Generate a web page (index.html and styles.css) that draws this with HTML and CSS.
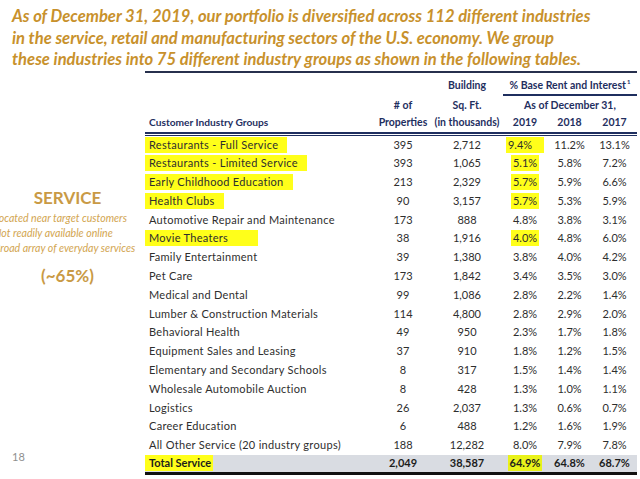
FILE: index.html
```html
<!DOCTYPE html>
<html lang="en">
<head>
<meta charset="utf-8">
<title>Service Industry Groups</title>
<link rel="stylesheet" href="styles.css">
</head>
<body>
<div class="page">
  <p class="title">As of December 31, 2019, our portfolio is diversified across 112 different industries<br>in the service, retail and manufacturing sectors of the U.S. economy. We group<br>these industries into 75 different industry groups as shown in the following tables.</p>
  <div class="main">
    <aside class="side">
      <div class="side-head">SERVICE</div>
      <ul class="bullets">
        <li>Located near target customers</li>
        <li>Not readily available online</li>
        <li>Broad array of everyday services</li>
      </ul>
      <div class="side-pct">(~65%)</div>
      <div class="pageno">18</div>
    </aside>
    <div class="tbl">
      <div class="cols hA">
        <div></div><div></div>
        <div class="hc hc-pad">Building</div>
        <div class="hc span3 uline">% Base Rent and Interest<sup>1</sup></div>
      </div>
      <div class="cols hB">
        <div></div>
        <div class="hc">#&nbsp;of</div>
        <div class="hc">Sq. Ft.</div>
        <div class="hc span3">As of December 31,</div>
      </div>
      <div class="cols hC">
        <div class="hc left">Customer Industry Groups</div>
        <div class="hc">Properties</div>
        <div class="hc">(in thousands)</div>
        <div class="hc">2019</div>
        <div class="hc">2018</div>
        <div class="hc">2017</div>
      </div>

      <div class="cols row"><div class="lbl"><span class="hl">Restaurants - Full Service</span></div><div>395</div><div>2,712</div><div><span class="hn hn-wide">9.4%</span></div><div>11.2%</div><div>13.1%</div></div>
      <div class="cols row"><div class="lbl"><span class="hl">Restaurants - Limited Service</span></div><div>393</div><div>1,065</div><div><span class="hn">5.1%</span></div><div>5.8%</div><div>7.2%</div></div>
      <div class="cols row"><div class="lbl"><span class="hl">Early Childhood Education</span></div><div>213</div><div>2,329</div><div><span class="hn">5.7%</span></div><div>5.9%</div><div>6.6%</div></div>
      <div class="cols row"><div class="lbl"><span class="hl">Health Clubs</span></div><div>90</div><div>3,157</div><div><span class="hn">5.7%</span></div><div>5.3%</div><div>5.9%</div></div>
      <div class="cols row"><div class="lbl">Automotive Repair and Maintenance</div><div>173</div><div>888</div><div>4.8%</div><div>3.8%</div><div>3.1%</div></div>
      <div class="cols row"><div class="lbl"><span class="hl hl-long">Movie Theaters</span></div><div>38</div><div>1,916</div><div><span class="hn">4.0%</span></div><div>4.8%</div><div>6.0%</div></div>
      <div class="cols row"><div class="lbl">Family Entertainment</div><div>39</div><div>1,380</div><div>3.8%</div><div>4.0%</div><div>4.2%</div></div>
      <div class="cols row"><div class="lbl">Pet Care</div><div>173</div><div>1,842</div><div>3.4%</div><div>3.5%</div><div>3.0%</div></div>
      <div class="cols row"><div class="lbl">Medical and Dental</div><div>99</div><div>1,086</div><div>2.8%</div><div>2.2%</div><div>1.4%</div></div>
      <div class="cols row"><div class="lbl">Lumber &amp; Construction Materials</div><div>114</div><div>4,800</div><div>2.8%</div><div>2.9%</div><div>2.0%</div></div>
      <div class="cols row"><div class="lbl">Behavioral Health</div><div>49</div><div>950</div><div>2.3%</div><div>1.7%</div><div>1.8%</div></div>
      <div class="cols row"><div class="lbl">Equipment Sales and Leasing</div><div>37</div><div>910</div><div>1.8%</div><div>1.2%</div><div>1.5%</div></div>
      <div class="cols row"><div class="lbl">Elementary and Secondary Schools</div><div>8</div><div>317</div><div>1.5%</div><div>1.4%</div><div>1.4%</div></div>
      <div class="cols row"><div class="lbl">Wholesale Automobile Auction</div><div>8</div><div>428</div><div>1.3%</div><div>1.0%</div><div>1.1%</div></div>
      <div class="cols row"><div class="lbl">Logistics</div><div>26</div><div>2,037</div><div>1.3%</div><div>0.6%</div><div>0.7%</div></div>
      <div class="cols row"><div class="lbl">Career Education</div><div>6</div><div>488</div><div>1.2%</div><div>1.6%</div><div>1.9%</div></div>
      <div class="cols row"><div class="lbl">All Other Service (20 industry groups)</div><div>188</div><div>12,282</div><div>8.0%</div><div>7.9%</div><div>7.8%</div></div>
      <div class="cols row total"><div class="lbl"><span class="hl hl-total">Total Service</span></div><div>2,049</div><div>38,587</div><div><span class="hn">64.9%</span></div><div>64.8%</div><div>68.7%</div></div>
    </div>
  </div>
</div>
</body>
</html>
```

FILE: styles.css
```css
* { box-sizing: border-box; }
html, body { margin: 0; padding: 0; background: #fff; }
body { font-family: Lato, "Open Sans", sans-serif; width: 640px; height: 479px; overflow: hidden; }

.page { display: flex; flex-direction: column; }

.title {
  margin: 0;
  padding: 6px 0 0 12px;
  font-size: 16.6px;
  line-height: 21.7px;
  font-weight: 700;
  font-style: italic;
  color: #c8912c;
  white-space: nowrap;
}

.main { display: flex; }

.side {
  width: 145px;
  flex: none;
  display: flex;
  flex-direction: column;
  align-items: center;
  padding: 117px 10px 11px 0;
  color: #c99a45;
  overflow: hidden;
}
.side-head { font-size: 17px; line-height: 20px; font-weight: 700; }
.bullets {
  list-style: none;
  margin: 3px 0 0 -6px;
  padding: 0;
  align-self: flex-start;
  font-size: 10.6px;
  line-height: 14.7px;
  font-style: italic;
  color: #d2a550;
  white-space: nowrap;
}
.side-pct { margin-top: 11px; font-size: 17px; line-height: 20px; font-weight: 700; }
.pageno {
  margin-top: auto;
  align-self: flex-start;
  padding-left: 12px;
  font-size: 11px;
  line-height: 14px;
  color: #8f8f8f;
}

.tbl {
  width: 492px;
  flex: none;
  border-top: 2px solid #27304d;
  font-size: 11px;
  color: #2e2e2e;
}

.cols {
  display: grid;
  grid-template-columns: 230px 56px 72px 44px 45px 45px;
}

.hc {
  text-align: center;
  font-weight: 700;
  color: #1f2f5f;
  font-size: 10.5px;
  line-height: 14px;
  white-space: nowrap;
}
.hc.left { text-align: left; padding-left: 4px; font-size: 10.2px; }
.span3 { grid-column: span 3; }

.hA { height: 23px; align-items: end; }
.hA .hc { padding-bottom: 2px; }
.hA .hc-pad { padding-bottom: 4px; }
.uline { border-bottom: 2px solid #1f2f5f; }
.hc sup { font-size: 6px; vertical-align: 5px; line-height: 0; margin-left: 1px; }

.hB { height: 17px; align-items: center; }

.hC {
  height: 21px;
  align-items: center;
  padding-bottom: 1px;
  border-bottom: 2px solid #1f2f5f;
  box-shadow: 0 1px 0 #fff, 0 2px 0 #1f2f5f;
  margin-bottom: 1px;
}

.row {
  height: 18.8px;
  align-items: center;
  line-height: 14px;
  text-align: center;
  white-space: nowrap;
}
.row .lbl { text-align: left; padding-left: 4px; letter-spacing: 0.3px; }

.hl {
  background: #ffff1a;
  margin-left: -4px;
  padding: 1px 9px 2px 4px;
}
.hl-long { padding-right: 30px; }
.hn { background: #ffff1a; padding: 1px 2px 2px 2px; }
.hn-wide { padding-right: 12px; }

.total {
  background: #d9dce2;
  font-weight: 700;
  color: #1c1c1c;
  border-bottom: 3px solid #111;
  height: 20.4px;
}
.total .lbl { letter-spacing: 0; }
.hl-total { padding-right: 2px; }
.total .hn { background: #e9f21a; }
```
